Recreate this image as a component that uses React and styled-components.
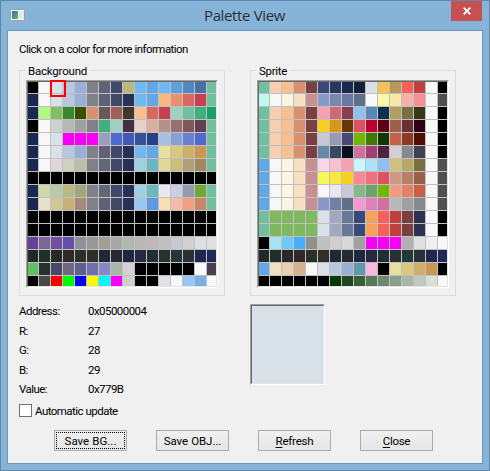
import React from 'react';
import styled, { createGlobalStyle, css } from 'styled-components';

const Global = createGlobalStyle`
  * { box-sizing: border-box; }
  body { margin: 0; background: #86b4d9; overflow: hidden; }
`;

const Window = styled.div`
  width: 490px;
  height: 471px;
  padding: 0 6px 6px;
  display: flex;
  flex-direction: column;
  background: #86b4d9;
  border: 1px solid #5f87aa;
  color: #000;
  font: 11.5px/14px Roboto, "Liberation Sans", sans-serif;
`;

const TitleBar = styled.header`
  height: 29px;
  flex: none;
  display: grid;
  grid-template-columns: 32px 1fr 32px;
`;

const TitleIcon = styled.svg`
  margin: 7px 0 0 2px;
`;

const Title = styled.h1`
  margin: 4px 1px 0 0;
  text-align: center;
  font: 15px/20px "Open Sans", "Noto Sans", sans-serif;
  letter-spacing: -0.36px;
  color: #2a2f35;
`;

const CloseButton = styled.button`
  width: 31px;
  height: 20px;
  padding: 0;
  border: 0;
  background: #c75050;
  display: grid;
  place-items: center;
`;

const Client = styled.main`
  flex: 1;
  background: #f0f0f0;
  border: 1px solid #6c98bb;
  padding: 11px 0 0 11px;
`;

const Label = styled.span`
  display: block;
  white-space: nowrap;
  letter-spacing: ${(p) => p.$spacing ?? -0.55}px;
  word-spacing: 0.3px;
`;

const Groups = styled.div`
  display: flex;
  gap: 25px;
  margin-top: 14px;
`;

const Group = styled.section`
  width: 206px;
  height: 226px;
  padding-left: 6px;
  border: 1px solid #dcdcdc;
`;

const Legend = styled.div`
  width: max-content;
  margin: -7px 0 2px 0;
  padding: 0 2px;
  background: #f0f0f0;
`;

const Sunken = styled.div`
  width: ${(p) => p.$width}px;
  height: ${(p) => p.$height}px;
  border: 1px solid;
  border-color: #a0a0a0 #fff #fff #a0a0a0;
`;

const SunkenInner = styled.div`
  height: 100%;
  border: 1px solid;
  border-color: #696969 #e3e3e3 #e3e3e3 #696969;
  background: ${(p) => p.$color};
`;

const Swatches = styled(SunkenInner)`
  display: grid;
  grid-template-columns: 10px repeat(14, 11px) 9px;
  grid-template-rows: 11px repeat(14, 12px) 10px;
  gap: 1px;
`;

const Swatch = styled.div`
  background: ${(p) => p.$color};
  ${(p) =>
    p.$selected &&
    css`
      position: relative;
      &::after {
        content: '';
        position: absolute;
        left: -1px;
        top: -2px;
        width: 12px;
        height: 13px;
        border: 2px solid #f00;
      }
    `}
`;

const Details = styled.div`
  display: grid;
  grid-template-columns: 231px 75px;
  height: 98px;
  margin-top: 8px;
`;

const Fields = styled.div`
  display: grid;
  grid-template-columns: 69px 1fr;
  grid-auto-rows: 19.5px;
  align-content: start;
`;

const CheckRow = styled.label`
  display: flex;
  gap: 3px;
  margin-top: 2px;
`;

const Box = styled.span`
  width: 13px;
  height: 13px;
  border: 1px solid #707070;
  background: #fff;
`;

const Buttons = styled.div`
  display: flex;
  gap: 29px;
  margin: 12px 0 0 35px;
`;

const PushButton = styled.button`
  width: 73px;
  height: 21px;
  padding: 0;
  display: grid;
  place-items: center;
  border: 1px solid #acacac;
  background: linear-gradient(#f0f0f0, #e5e5e5);
  color: #000;
  font: inherit;
  ${(p) =>
    p.$focused &&
    css`
      outline: 1px dotted #000;
      outline-offset: -3px;
    `}
`;

const Mnemonic = styled.span`
  text-decoration: underline;
  text-underline-offset: 2px;
  text-decoration-thickness: 1px;
`;

const SHADES = '202828 203028 282828 302828 283028 303028 202838 282830 202840 282840 203030 283030 203838 283038 202850 202858';
const BLACK = Array(16).fill('000000').join(' ');
const SKIN = '70c0a0 f8d0b0 f8c090 d89070 784040';
const PALE = '60a8e8 f8f8f8 f8f8e0 f8e0c0 c89090';
const FIELD = '70c0a0 80b860 80b860 80b860 80b860 d8e0e8 a0a8c0 687898 384878 f8a058 f86058 c04040 784040 303050 f8f8f8 000000';

const BACKGROUND = [
  '000000 f8f8f8 d8e0e8 b8c8e0 98b0d8 808088 606078 404868 b8b880 70b8f0 60a8e8 70b8f0 60a0d8 5088c0 4870a8 70c0a0',
  '182850 f8f8f8 d8e0e8 b8c8e0 98b0d8 808088 606078 404868 283058 70b8f0 60a8e8 f8b880 e89070 d86860 c84050 70c0a0',
  '182850 b0f880 80c060 388830 385000 d89070 685858 a06058 403830 f8c090 d86860 c84050 a0d0c0 70c0a0 40b080 18a068',
  '000000 f8f8f8 d0d0d0 b8b8b8 a0a0a0 808088 40b080 a0d0c0 403040 e8d0c8 d8b0a0 b89088 987070 805858 604050 70c0a0',
  '182850 f8f8f8 d8e0e8 f800f8 f800f8 f800f8 98a0b8 5068d0 4058b8 385098 284088 a8c0e0 88a0d8 6880d0 5068d0 70c0a0',
  '182850 f8f8f8 d8e0e8 b8c8e0 98b0d8 808088 606078 404868 283058 70b8f0 60a8e8 e8e0a0 d8c880 d0b068 c89850 70c0a0',
  '182850 f8f8f8 e0d8d8 d0d0c0 b8c0a8 808088 606878 404868 283058 a0d0e0 68b8c0 e0d898 c8c078 b0a078 a08860 70c0a0',
  BLACK,
  '182850 d0d8a8 b8c8a8 b8b880 a0a878 808088 606878 404868 283058 a0d0e0 68b8c0 e8e8f0 c8d0e8 9898b0 70a838 70c0a0',
  '182850 e8e0c8 d0c890 c8b078 a88878 808088 606078 404868 283058 98c8f0 6098e8 f8e0b0 f8b8a8 f0a080 c88868 70c0a0',
  BLACK,
  BLACK,
  '684098 786898 7050a0 6850a8 909098 989898 a0a098 a8a8a8 b0b8b0 b8b8b8 c0b8b8 c0c0c0 c8c8d0 d0d0d0 d8e0e0 e0e0e0',
  SHADES,
  '60c060 283030 484868 706880 606090 7070a8 8888c8 a8b8a8 d8d0d8 000000 000000 000000 000000 000000 f8f8f8 484050',
  '000000 484848 f80000 00f800 0000f8 f8f800 00f8f8 f800f8 d0d0c8 000000 000000 e0e0e8 f8f8f8 98c8f8 78b0e0 f8f8f8',
];

const SPRITE = [
  `${SKIN} 384878 283860 182850 102038 d8e0e8 f8c058 b89858 f86058 c04040 f8f8f8 000000`,
  'c0f8f0 f8f8f8 f8f8e0 f8e0c0 c89090 8898c8 7888b0 6878a0 607088 f8f8f8 f8f8a8 f8e8a8 f8b0a8 f89090 f8f8f8 505050',
  `${SKIN} f8a0b0 d06878 884050 90c0f0 5888b8 103050 b0a060 787040 383818 f8f8f8 000000`,
  `${SKIN} f8d020 d89810 683808 e05060 c00030 600018 a06048 683030 300018 f8f8f8 000000`,
  `${SKIN} c8c8d8 9898b8 484878 70b800 407800 103800 c86048 903828 501000 f8f8f8 000000`,
  `${SKIN} 6888a8 384860 081020 d070a0 a04070 502040 d0d0d0 888890 404050 f8f8f8 000000`,
  `${PALE} f8d8e8 f8c0d0 f8a0b0 c8f8f8 b0e0f8 90c0f0 d0c080 b8a868 787040 f8f8f8 505050`,
  `${PALE} f8f858 f8e840 f8d020 f88898 f07080 e05060 d09880 b88068 986048 f8f8f8 505050`,
  `${PALE} f8f8f8 e8e8f0 c8c8d8 88b888 70a070 70b800 f89880 e88068 c86048 f8f8f8 505050`,
  `${PALE} 8898c8 7080a8 607088 f898d0 e080b8 d070a0 b8b8b8 a0a0a0 888890 f8f8f8 505050`,
  FIELD,
  FIELD,
  '000000 a8e0f8 70c8f8 48b0f8 909090 c0c0c0 d0d0d0 d8d8d8 a0a0a0 f800f8 f800f8 f800f8 b0b0b0 e0e0e0 f0f0f0 f8f8f8',
  SHADES,
  '60a8e8 f0e0c0 e8d0b0 d8b090 f8f8f8 d8e0e8 b8c8e0 98b0d8 6098b0 f8b8e0 000000 e8e0a0 d8c880 d0b068 c89850 000000',
  '000000 000000 000000 000000 000000 000000 083808 204820 386038 587858 708870 88a088 a8b8a8 c0c8c0 d8e0d8 f8f8f8',
];

const FIELDS = [
  ['Address:', '0x05000004'],
  ['R:', '27'],
  ['G:', '28'],
  ['B:', '29'],
  ['Value:', '0x779B'],
];

function Palette({ title, rows, selected, spacing }) {
  const colors = rows.join(' ').split(' ');
  return (
    <Group>
      <Legend><Label $spacing={spacing}>{title}</Label></Legend>
      <Sunken $width={192} $height={208}>
        <Swatches $color="#c0c0c0">
          {colors.map((c, i) => (
            <Swatch key={i} $color={`#${c}`} $selected={i === selected} />
          ))}
        </Swatches>
      </Sunken>
    </Group>
  );
}

export default function App() {
  return (
    <>
      <Global />
      <Window>
        <TitleBar>
          <TitleIcon width="17" height="14" viewBox="0 0 17 14">
            <defs>
              <linearGradient id="pane" x1="0" y1="0" x2="1" y2="1">
                <stop offset="0" stopColor="#4468a0" />
                <stop offset="1" stopColor="#55b878" />
              </linearGradient>
            </defs>
            <rect x="1.5" y="1.5" width="14" height="11" rx="1" fill="#f8f8f8" stroke="#a0a09c" />
            <rect x="3" y="3" width="6" height="8" fill="url(#pane)" />
            <rect x="10" y="3" width="3" height="8" fill="#e2e6e3" />
            <rect x="14" y="3" width="1" height="8" fill="#dde5dc" />
          </TitleIcon>
          <Title>Palette View</Title>
          <CloseButton aria-label="Close window">
            <svg width="8" height="8" viewBox="0 0 8 8">
              <path d="M0.7 0.7 7.3 7.3M7.3 0.7 0.7 7.3" stroke="#fff" strokeWidth="1.9" />
            </svg>
          </CloseButton>
        </TitleBar>
        <Client>
          <Label>Click on a color for more information</Label>
          <Groups>
            <Palette title="Background" rows={BACKGROUND} selected={2} spacing={-0.2} />
            <Palette title="Sprite" rows={SPRITE} spacing={-0.3} />
          </Groups>
          <Details>
            <Fields>
              {FIELDS.map(([name, value]) => (
                <React.Fragment key={name}>
                  <Label>{name}</Label>
                  <Label>{value}</Label>
                </React.Fragment>
              ))}
            </Fields>
            <Sunken $width={75} $height={81}>
              <SunkenInner $color="#d8e0e8" />
            </Sunken>
          </Details>
          <CheckRow>
            <Box />
            <Label>Automatic update</Label>
          </CheckRow>
          <Buttons>
            <PushButton $focused><Label $spacing={0}>Save BG...</Label></PushButton>
            <PushButton><Label $spacing={-0.05}>Save OBJ...</Label></PushButton>
            <PushButton><Label $spacing={-0.2}><Mnemonic>R</Mnemonic>efresh</Label></PushButton>
            <PushButton><Label $spacing={-0.3}><Mnemonic>C</Mnemonic>lose</Label></PushButton>
          </Buttons>
        </Client>
      </Window>
    </>
  );
}
